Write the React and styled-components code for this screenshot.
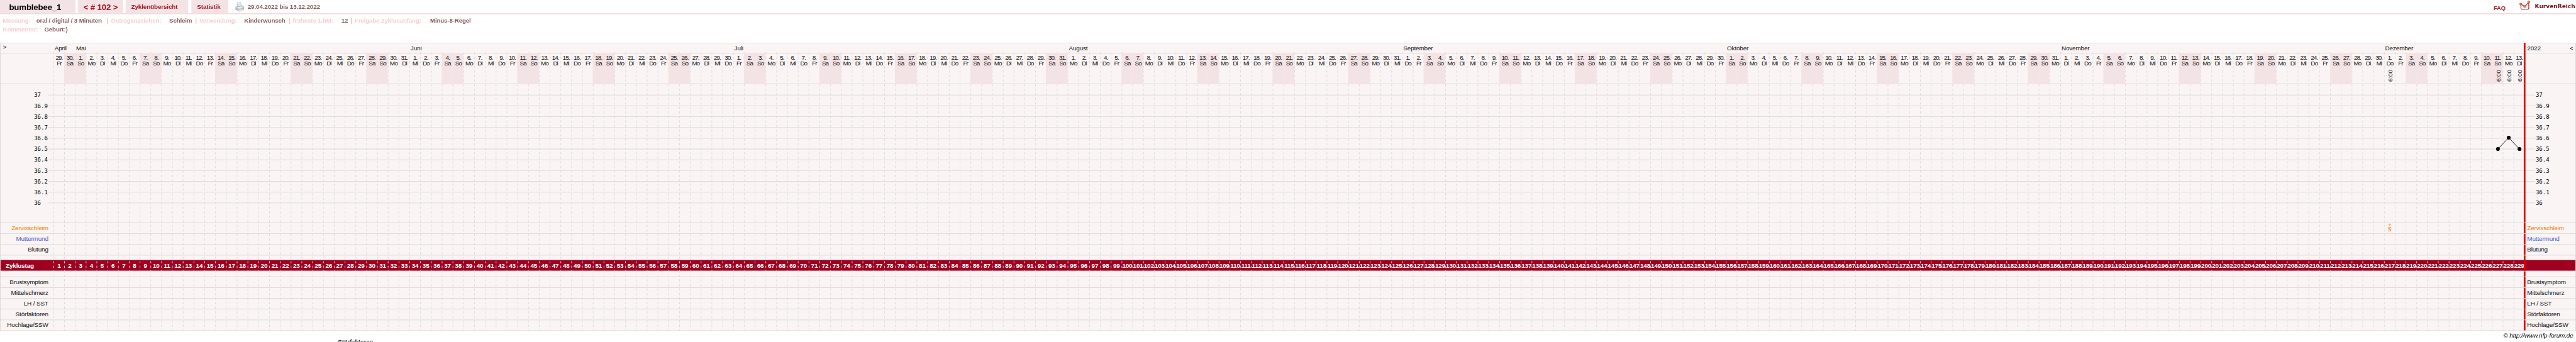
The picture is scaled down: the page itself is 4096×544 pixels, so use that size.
import styled, { createGlobalStyle, css } from "styled-components";

const GlobalStyle = createGlobalStyle`
  * {
    box-sizing: border-box;
  }
  body {
    margin: 0;
    background: #fff;
    overflow: hidden;
  }
`;

const DAY = 19; // width of one day column
const LABEL = 93; // width of the left label column
const LINE = "#d9d9d9";
const WEEKEND = "#f4e3e5";

const Viewport = styled.div`
  width: 4096px;
  height: 544px;
  overflow: hidden;
`;

const Page = styled.div`
  width: 4536px;
  height: 602px;
  overflow: hidden;
  transform: scale(0.903);
  transform-origin: 0 0;
  font-family: "Liberation Sans", Arial, sans-serif;
  font-size: 11px;
  letter-spacing: -0.18px;
  color: #111;
  white-space: nowrap;
`;

const TopBar = styled.header`
  display: flex;
  height: 25px;
  border-bottom: 2px solid #f3dadb;
`;

const Tab = styled.div`
  width: ${(p) => p.$width}px;
  margin-right: ${(p) => p.$gap || 4}px;
  padding-left: ${(p) => p.$pad}px;
  background: ${WEEKEND};
  color: ${(p) => p.$color || "#a31522"};
  font-size: ${(p) => (p.$big ? 14.67 : 11)}px;
  font-weight: bold;
  line-height: ${(p) => (p.$big ? 26 : 25)}px;
`;

const Range = styled.div`
  padding-left: 6px;
  color: #8b5a5c;
  font-weight: bold;
  line-height: 25px;
`;

const Printer = styled.svg`
  width: 16px;
  height: 17px;
  margin: 4px 0 0 8px;
`;

const Faq = styled.a`
  margin-left: auto;
  width: 45px;
  color: #a12a33;
  font-size: 10.4px;
  font-weight: bold;
  line-height: 29px;
`;

const Logo = styled.svg`
  width: 22px;
  height: 19px;
`;

const Brand = styled.div`
  width: 78px;
  padding-left: 5.5px;
  color: #800d18;
  font-family: "DejaVu Sans", Verdana, sans-serif;
  font-size: 10px;
  font-weight: bold;
  letter-spacing: 0;
  line-height: 21px;
`;

const Meta = styled.section`
  height: 50px;
  padding: 4px 0 0 5px;
  font-size: 10.8px;
  font-weight: bold;
  line-height: 15px;
`;

const MetaRow = styled.div`
  display: flex;
`;

const Key = styled.span`
  width: ${(p) => p.$width}px;
  color: #f6cdcf;
`;

const Value = styled.span`
  width: ${(p) => p.$width}px;
  color: #8b5a5c;
`;

const Divider = styled.span`
  width: 7.5px;
  color: #f0b9bc;
`;

const Chart = styled.main`
  position: relative;
  border: 1px solid ${LINE};
  border-top: 0;
  background: #faf4f4;
`;

const Row = styled.div`
  display: flex;
  height: ${(p) => p.$height}px;
  border-top: 1px solid ${LINE};
`;

const DateRow = styled.div`
  display: flex;
  height: 54px;
`;

const CycleRow = styled.div`
  display: flex;
  height: 19px;
  background: #9f0020;
  color: #fff;
  font-weight: bold;
  line-height: 20.5px;
`;

const Label = styled.div`
  flex: none;
  width: ${LABEL}px;
  padding-right: 9px;
  color: ${(p) => p.$color || "#111"};
  line-height: 17px;
  text-align: right;
`;

const LeftLabel = styled(Label)`
  padding: 0 0 0 ${(p) => p.$pad}px;
  color: inherit;
  line-height: inherit;
  text-align: left;
`;

const Days = styled.div`
  display: flex;
  flex: none;
  width: ${229 * DAY}px;
`;

const Month = styled.div`
  flex: none;
  width: ${(p) => p.$days * DAY}px;
  padding-left: 2px;
  line-height: 18.5px;
`;

const EndMark = styled.div`
  flex: none;
  width: 3px;
  margin-left: -1px;
  margin-top: ${(p) => (p.$joined ? -1 : 0)}px;
  background: #dd0000;
  z-index: 2;
`;

const RightLabel = styled.div`
  display: flex;
  justify-content: space-between;
  flex: 1;
  padding: 0 4px 0 3px;
  color: ${(p) => p.$color || "#111"};
  line-height: ${(p) => p.$line || 17}px;
`;

const HeaderSide = styled.div`
  flex: ${(p) => (p.$width ? "none" : 1)};
  width: ${(p) => p.$width}px;
  border-top: 1px solid ${LINE};
`;

const Day = styled.div`
  display: flex;
  flex-direction: column;
  align-items: center;
  flex: none;
  width: ${DAY}px;
  height: 55px;
  padding: 2px 0 0 1px;
  border-top: 1px solid ${LINE};
  letter-spacing: -1.1px;
  line-height: 10px;
  ${(p) =>
    p.$weekend &&
    css`
      background: ${WEEKEND};
      border-color: ${WEEKEND};
      z-index: 1;
    `}
`;

const Time = styled.span`
  margin: 7px 0 0 1px;
  letter-spacing: -0.1px;
  writing-mode: vertical-rl;
  transform: rotate(180deg);
`;

const CycleDay = styled.div`
  flex: none;
  width: ${DAY}px;
  padding-left: 1px;
  text-align: center;
`;

const Scale = styled.div`
  flex: none;
  width: ${(p) => p.$width}px;
  padding: 10px 0 0 ${(p) => p.$pad}px;
  color: #000;
  font-family: "DejaVu Sans Mono", monospace;
  font-size: 10px;
  letter-spacing: 0;
  line-height: 19px;
`;

const Mucus = styled.div`
  width: ${DAY}px;
  margin-left: ${216 * DAY}px;
  padding: 1px 0 0 1px;
  color: #f98a14;
  font-family: "DejaVu Sans Mono", monospace;
  font-size: 10.5px;
  font-weight: bold;
  line-height: 9px;
  text-align: center;

  span {
    display: block;
    height: 6px;
    font-size: 9px;
    font-weight: normal;
    line-height: 6px;
  }
`;

const Lines = styled.svg`
  position: absolute;
  left: 0;
  top: 0;
  width: 4534px;
  height: 508px;
  z-index: 1;
  pointer-events: none;
`;

const Credit = styled.div`
  padding: 2px 5px 0 0;
  color: #000;
  font-style: italic;
  line-height: 13px;
  text-align: right;
`;

const Section = styled.h4`
  margin: 0 0 0 595px;
  color: #000;
  font-size: 10.8px;
  line-height: 9px;
`;

const WEEKDAYS = ["So", "Mo", "Di", "Mi", "Do", "Fr", "Sa"];
const months = [
  ["April", 2],
  ["Mai", 31],
  ["Juni", 30],
  ["Juli", 31],
  ["August", 31],
  ["September", 30],
  ["Oktober", 31],
  ["November", 30],
  ["Dezember", 13],
];
const temps = ["37", "36.9", "36.8", "36.7", "36.6", "36.5", "36.4", "36.3", "36.2", "36.1", "36"];
const times = { 216: "6:00", 226: "6:00", 227: "6:00", 228: "6:00" };

// every day of the cycle, starting on 29.04.2022
const days = Array.from({ length: 229 }, (_, i) => {
  const d = new Date(Date.UTC(2022, 3, 29 + i));
  return { date: d.getUTCDate(), weekday: d.getUTCDay() };
});

const signs = [
  ["Zervixschleim", "#f98200"],
  ["Muttermund", "#4a62d0"],
  ["Blutung"],
];
const extras = ["Brustsymptom", "Mittelschmerz", "LH / SST", "Störfaktoren", "Hochlage/SSW"];

const Grid = () => (
  <Lines viewBox="0 0 4534 508">
    {days.map((_, i) => (
      <line
        key={i}
        x1={LABEL + 0.5 + i * DAY}
        x2={LABEL + 0.5 + i * DAY}
        y1={17}
        y2={507}
        stroke={LINE}
        strokeDasharray="4 4"
      />
    ))}
    {temps.map((t, i) => (
      <line key={t} x1={84} x2={4463} y1={92.5 + i * 19} y2={92.5 + i * 19} stroke={LINE} />
    ))}
    <polyline points="4397.5,187.5 4416.5,167.5 4435.5,187.5" fill="none" stroke="#000" />
    <circle cx="4397.5" cy="187.5" r="3.4" />
    <circle cx="4416.5" cy="167.5" r="3.4" />
    <circle cx="4435.5" cy="187.5" r="3.4" />
  </Lines>
);

const Header = () => (
  <TopBar>
    <Tab $width={133} $pad={16} $big $color="#000">
      bumblebee_1
    </Tab>
    <Tab $width={80} $pad={10} $big>
      &lt; # 102 &gt;
    </Tab>
    <Tab $width={110} $pad={10} $gap={6}>
      Zyklenübersicht
    </Tab>
    <Tab $width={65} $pad={10}>
      Statistik
    </Tab>
    <Printer viewBox="0 0 16 17">
      <path d="M3 1 L9.5 0 L12 7 L5 8.5 Z" fill="#d5e7fb" stroke="#9fb9dc" strokeWidth=".7" />
      <path d="M1 9 L4.5 6.5 L5.3 8.5 L11.5 7.2 L11 5.5 L15 8 L15 12.5 L8 16 L1 12.5 Z" fill="#c4c4c4" stroke="#8f8f8f" strokeWidth=".7" />
      <path d="M1.3 9.3 L8 11.5 L14.7 8.4 L11.5 7.2 L5.3 8.5 Z" fill="#ececec" />
      <path d="M5 12.2 L8 13.4 L12.5 11.2 L14 13 L8.5 15.8 L4.5 14 Z" fill="#f8f8f8" stroke="#999" strokeWidth=".5" />
    </Printer>
    <Range>29.04.2022 bis 13.12.2022</Range>
    <Faq>FAQ</Faq>
    <Logo viewBox="0 0 22 19">
      <path d="M0 12.5 H22 M18 8 V19 M3 18 V8" stroke="#eee" strokeWidth=".6" />
      <path d="M3 8 V14.5 Q3 16.3 5 16.3 H14.5 Q16.8 16.3 16.8 14.5 V4 L10 11.5 L3 7.5" fill="none" stroke="#b01848" strokeWidth="1.3" />
      <g fill="#f7931e" stroke="#b03028" strokeWidth=".8">
        <circle cx="2.7" cy="7.3" r="1.9" />
        <circle cx="9.8" cy="11.3" r="1.9" />
        <circle cx="16.8" cy="3.5" r="1.9" />
      </g>
    </Logo>
    <Brand>KurvenReich</Brand>
  </TopBar>
);

const App = () => {
  return (
    <Viewport>
      <GlobalStyle />
      <Page>
        <Header />
        <Meta>
          <MetaRow>
            <Key $width={59}>Messung:</Key>
            <Value $width={124}>oral / digital / 3 Minuten</Value>
            <Divider>|</Divider>
            <Key $width={102.5}>Östrogenzeichen:</Key>
            <Value $width={45.5}>Schleim</Value>
            <Divider>|</Divider>
            <Key $width={79}>Verwendung:</Key>
            <Value $width={78}>Kinderwunsch</Value>
            <Divider>|</Divider>
            <Key $width={85.5}>früheste 1.hM:</Key>
            <Value $width={16}>12</Value>
            <Divider>|</Divider>
            <Key $width={133}>Freigabe Zyklusanfang:</Key>
            <Value>Minus-8-Regel</Value>
          </MetaRow>
          <MetaRow>
            <Key $width={73}>Kommentar:</Key>
            <Value>Geburt:)</Value>
          </MetaRow>
        </Meta>

        <Chart>
          <Grid />
          <Row $height={18}>
            <LeftLabel $pad={4}>&gt;</LeftLabel>
            <Days>
              {months.map(([name, count]) => (
                <Month key={name} $days={count}>
                  {name}
                </Month>
              ))}
            </Days>
            <EndMark $joined />
            <RightLabel $line={18.5}>
              <span>2022</span>
              <span>&lt;</span>
            </RightLabel>
          </Row>
          <DateRow>
            <HeaderSide $width={LABEL} />
            <Days>
              {days.map((d, i) => (
                <Day key={i} $weekend={d.weekday === 0 || d.weekday === 6}>
                  <span>{d.date}.</span>
                  <span>{WEEKDAYS[d.weekday]}</span>
                  {times[i] && <Time>{times[i]}</Time>}
                </Day>
              ))}
            </Days>
            <EndMark />
            <HeaderSide />
          </DateRow>
          <Row $height={245}>
            <Scale $width={LABEL} $pad={59}>
              {temps.map((t) => (
                <div key={t}>{t}</div>
              ))}
            </Scale>
            <Days />
            <EndMark $joined />
            <Scale $width={88} $pad={18}>
              {temps.map((t) => (
                <div key={t}>{t}</div>
              ))}
            </Scale>
          </Row>
          {signs.map(([name, color], i) => (
            <Row key={name} $height={19}>
              <Label $color={color}>{name}</Label>
              <Days>
                {i === 0 && (
                  <Mucus>
                    <span>+</span>S
                  </Mucus>
                )}
              </Days>
              <EndMark />
              <RightLabel $color={color}>{name}</RightLabel>
            </Row>
          ))}
          <Row $height={9}>
            <Label />
            <Days />
            <EndMark />
          </Row>
          <CycleRow>
            <LeftLabel $pad={9}>Zyklustag</LeftLabel>
            <Days>
              {days.map((_, i) => (
                <CycleDay key={i}>{i + 1}</CycleDay>
              ))}
            </Days>
            <EndMark />
          </CycleRow>
          <Row $height={10}>
            <Label />
            <Days />
            <EndMark />
          </Row>
          {extras.map((name) => (
            <Row key={name} $height={19}>
              <Label>{name}</Label>
              <Days />
              <EndMark />
              <RightLabel>{name}</RightLabel>
            </Row>
          ))}
        </Chart>
        <Credit>© http://www.nfp-forum.de</Credit>
        <Section>Störfaktoren</Section>
      </Page>
    </Viewport>
  );
};

export default App;
